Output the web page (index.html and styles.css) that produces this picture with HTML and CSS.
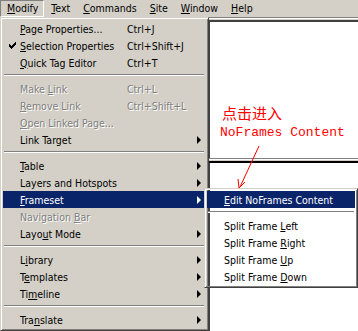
FILE: index.html
```html
<!DOCTYPE html>
<html lang="en">
<head>
    <meta charset="UTF-8">
    <title>Modify Menu</title>
    <link rel="stylesheet" href="styles.css">
</head>
<body>
    <div class="menubar">
        <span class="mb-item open"><u>M</u>odify</span>
        <span class="mb-item"><u>T</u>ext</span>
        <span class="mb-item"><u>C</u>ommands</span>
        <span class="mb-item"><u>S</u>ite</span>
        <span class="mb-item"><u>W</u>indow</span>
        <span class="mb-item"><u>H</u>elp</span>
    </div>

    <div class="stage">
        <div class="menu">
            <div class="item"><span class="label"><u>P</u>age Properties...</span><span class="key">Ctrl+J</span></div>
            <div class="item">
                <svg class="check" width="7" height="7" viewBox="0 0 7 7"><path d="M0 2h1v1h1v1h1V3h1V2h1V1h1V0h1v3H6v1H5v1H4v1H3v1H2V6H1V5H0z" fill="#000"/></svg>
                <span class="label"><u>S</u>election Properties</span><span class="key">Ctrl+Shift+J</span>
            </div>
            <div class="item"><span class="label"><u>Q</u>uick Tag Editor</span><span class="key">Ctrl+T</span></div>
            <div class="sep"></div>
            <div class="item disabled"><span class="label">Make <u>L</u>ink</span><span class="key">Ctrl+L</span></div>
            <div class="item disabled"><span class="label"><u>R</u>emove Link</span><span class="key">Ctrl+Shift+L</span></div>
            <div class="item disabled"><span class="label"><u>O</u>pen Linked Page...</span><span class="key"></span></div>
            <div class="item sub"><span class="label">Link Target</span><span class="key"></span></div>
            <div class="sep"></div>
            <div class="item sub"><span class="label"><u>T</u>able</span><span class="key"></span></div>
            <div class="item sub"><span class="label">Layers and Hotspots</span><span class="key"></span></div>
            <div class="item sub active"><span class="label"><u>F</u>rameset</span><span class="key"></span></div>
            <div class="item disabled"><span class="label">Navigation <u>B</u>ar</span><span class="key"></span></div>
            <div class="item sub"><span class="label">Layo<u>u</u>t Mode</span><span class="key"></span></div>
            <div class="sep"></div>
            <div class="item sub"><span class="label">L<u>i</u>brary</span><span class="key"></span></div>
            <div class="item sub"><span class="label">T<u>e</u>mplates</span><span class="key"></span></div>
            <div class="item sub"><span class="label">Ti<u>m</u>eline</span><span class="key"></span></div>
            <div class="sep"></div>
            <div class="item sub"><span class="label">Tra<u>n</u>slate</span><span class="key"></span></div>
        </div>

        <div class="doc">
            <div class="doc-edge"></div>
            <div class="doc-frame upper"></div>
            <div class="doc-split"></div>
            <div class="doc-frame"></div>
        </div>
    </div>

    <div class="submenu">
        <div class="item active"><span class="label"><u>E</u>dit NoFrames Content</span></div>
        <div class="sep"></div>
        <div class="item"><span class="label">Split Frame <u>L</u>eft</span></div>
        <div class="item"><span class="label">Split Frame <u>R</u>ight</span></div>
        <div class="item"><span class="label">Split Frame <u>U</u>p</span></div>
        <div class="item"><span class="label">Split Frame <u>D</u>own</span></div>
    </div>

    <div class="note">
        <div class="note-cn">点击进入</div>
        <div class="note-en">NoFrames Content</div>
    </div>
    <svg class="note-arrow" width="30" height="46" viewBox="0 0 30 46">
        <path d="M22 1 L3 42" stroke="#ff0000" stroke-width="1" fill="none"/>
        <path d="M2 43 L1 34 M2 43 L8 37" stroke="#ff0000" stroke-width="1" fill="none"/>
    </svg>
</body>
</html>
```

FILE: styles.css
```css
body {
    margin: 0;
    width: 358px;
    height: 331px;
    overflow: hidden;
    position: relative;
    background-color: #d4d0c8;
    font-family: "DejaVu Sans Condensed", "DejaVu Sans", sans-serif;
    font-size: 10.5px;
    color: #000;
}
u {
    text-decoration: underline;
    text-underline-offset: 1px;
}

/* menu bar */
.menubar {
    display: flex;
    height: 17px;
    align-items: center;
}
.mb-item {
    padding: 0 5px 0 6px;
    line-height: 15px;
    border: 1px solid transparent;
}
.mb-item.open {
    border-color: #808080 #fff #fff #808080;
}

.stage {
    display: flex;
    height: 314px;
}

/* dropdown menu */
.menu {
    width: 209px;
    box-sizing: border-box;
    border: 1px solid;
    border-color: #d4d0c8 #404040 #404040 #d4d0c8;
    box-shadow: inset 1px 1px #fff, inset -1px -1px #808080;
    padding: 2px 3px 2px 2px;
    flex-shrink: 0;
}
.item {
    display: flex;
    align-items: center;
    height: 17px;
    padding-left: 17px;
    position: relative;
    white-space: nowrap;
}
.item .label {
    flex: 0 0 107px;
}
.item .key {
    flex: 1;
}
.item.sub::after {
    content: "";
    position: absolute;
    right: 4px;
    top: 5px;
    border-left: 4px solid #000;
    border-top: 4px solid transparent;
    border-bottom: 4px solid transparent;
}
.item.active {
    background-color: #0a246a;
    color: #fff;
}
.item.active.sub::after {
    border-left-color: #fff;
}
.item.disabled {
    color: #808080;
    text-shadow: 1px 1px 0 #fff;
}
.check {
    position: absolute;
    left: 6px;
    top: 5px;
}
.sep {
    height: 1px;
    margin: 3px 1px 4px 1px;
    background-color: #808080;
    border-bottom: 1px solid #fff;
}

/* document area with frames */
.doc {
    flex: 1;
    display: flex;
    flex-direction: column;
    background-color: #fff;
}
.doc-edge {
    height: 2px;
    background-color: #d4d0c8;
    border-top: 1px solid #808080;
    border-bottom: 2px solid #404040;
    box-shadow: inset 0 1px #fff;
}
.doc-frame {
    flex: 1;
    border-left: 1px solid #404040;
}
.doc-frame.upper {
    flex: 0 0 136px;
}
.doc-split {
    height: 2px;
    background-color: #d4d0c8;
    border-top: 1px solid #808080;
    border-bottom: 2px solid #000;
    box-shadow: inset 0 1px #fff;
}

/* submenu popup */
.submenu {
    position: absolute;
    left: 204px;
    top: 188px;
    width: 154px;
    box-sizing: border-box;
    border: 1px solid;
    border-color: #d4d0c8 #404040 #404040 #d4d0c8;
    box-shadow: inset 1px 1px #fff, inset -1px -1px #808080;
    padding: 2px;
}
.submenu .item .label {
    flex: 1;
}

/* red annotation */
.note {
    position: absolute;
    left: 220px;
    top: 102px;
    color: #ff0000;
}
.note-cn {
    font-family: "Noto Sans CJK SC", sans-serif;
    font-size: 15px;
    line-height: 22px;
    padding-left: 2px;
}
.note-en {
    font-family: "Liberation Mono", monospace;
    font-size: 13px;
    line-height: 18px;
}
.note-arrow {
    position: absolute;
    left: 237px;
    top: 145px;
}
```
